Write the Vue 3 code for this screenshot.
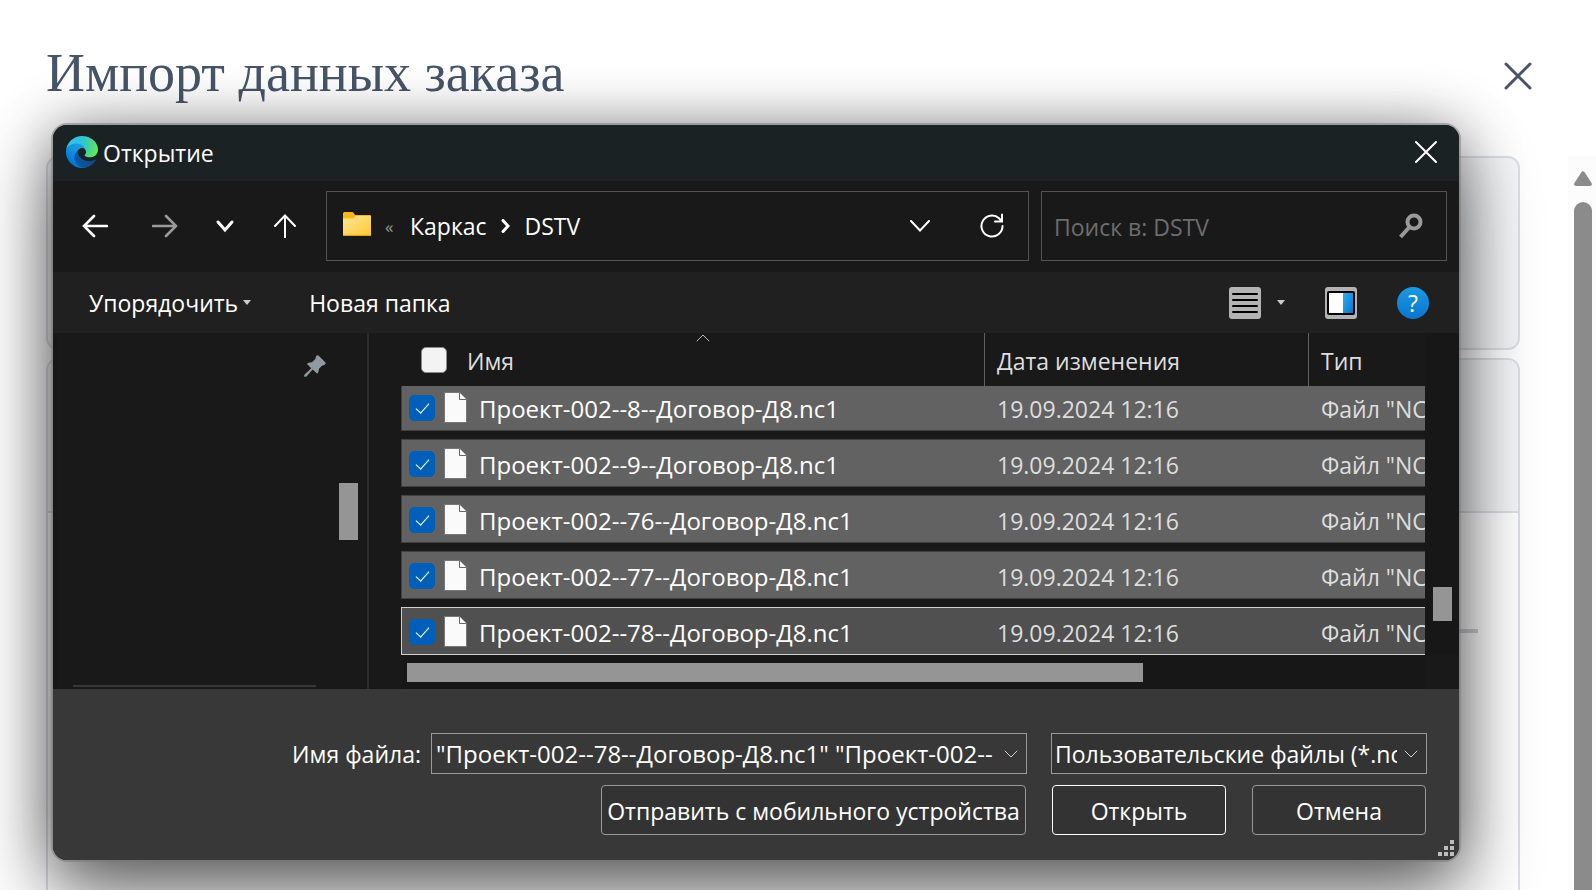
<script setup>
import { ref } from 'vue'

const files = ref([
  { name: 'Проект-002--8--Договор-Д8.nc1', date: '19.09.2024 12:16', type: 'Файл "NC1"', checked: true },
  { name: 'Проект-002--9--Договор-Д8.nc1', date: '19.09.2024 12:16', type: 'Файл "NC1"', checked: true },
  { name: 'Проект-002--76--Договор-Д8.nc1', date: '19.09.2024 12:16', type: 'Файл "NC1"', checked: true },
  { name: 'Проект-002--77--Договор-Д8.nc1', date: '19.09.2024 12:16', type: 'Файл "NC1"', checked: true },
  { name: 'Проект-002--78--Договор-Д8.nc1', date: '19.09.2024 12:16', type: 'Файл "NC1"', checked: true, focused: true },
])
const fileName = ref('"Проект-002--78--Договор-Д8.nc1" "Проект-002--')
const allChecked = ref(false)
</script>

<template>
  <div class="page">
    <header class="page-head">
      <h1>Импорт данных заказа</h1>
      <button class="page-close" type="button" aria-label="Закрыть">
        <svg width="28" height="28" viewBox="0 0 28 28"><path d="M2 2 26 26M26 2 2 26" /></svg>
      </button>
    </header>

    <div class="page-body">
      <div class="cards">
        <section class="card card-top"></section>
        <section class="card card-main">
          <div class="card-head"></div>
          <div class="card-line"></div>
        </section>
      </div>
      <div class="page-scroll">
        <svg width="18" height="16" viewBox="0 0 18 16"><path d="M7.4 1.2Q9-.6 10.6 1.2L17.6 12Q18.4 15 16 15H2Q-.4 15 .4 12Z" /></svg>
        <div class="page-thumb"></div>
      </div>
    </div>

    <div class="dialog" role="dialog" aria-labelledby="dlg-title">
      <div class="titlebar">
        <svg class="edge" width="32" height="32" viewBox="0 0 256 256">
          <defs>
            <linearGradient id="eA" x1="60" y1="178" x2="240" y2="178" gradientUnits="userSpaceOnUse"><stop offset="0" stop-color="#0c59a4" /><stop offset="1" stop-color="#114a8b" /></linearGradient>
            <linearGradient id="eB" x1="140" y1="90" x2="40" y2="210" gradientUnits="userSpaceOnUse"><stop offset="0" stop-color="#1b9de2" /><stop offset=".4" stop-color="#1595df" /><stop offset="1" stop-color="#0078d4" /></linearGradient>
            <radialGradient id="eC" cx="26" cy="46" r="240" gradientUnits="userSpaceOnUse"><stop offset="0" stop-color="#35c1f1" /><stop offset=".4" stop-color="#2dc2df" /><stop offset=".66" stop-color="#40cfa0" /><stop offset="1" stop-color="#66eb4e" /></radialGradient>
          </defs>
          <path fill="url(#eA)" d="M231 190.500c-3.400 1.800-6.900 3.400-10.500 4.700c-11.500 4.300-23.600 6.500-35.900 6.500c-47.300 0-88.500-32.500-88.500-74.300c.1-11.400 6.400-21.900 16.400-27.300c-42.800 1.800-53.800 46.400-53.800 72.500c0 73.900 68.100 81.400 82.800 81.400c7.900 0 19.800-2.300 27-4.600l1.300-.4c27.600-9.500 51-28.100 66.600-52.800c1.200-1.900.6-4.300-1.200-5.500C233.900 189.900 232.300 189.800 231 190.500z" />
          <path fill="url(#eB)" d="M105.700 241.400c-8.900-5.500-16.600-12.800-22.700-21.300c-26.300-36-18.400-86.500 17.600-112.800c3.800-2.700 7.700-5.200 11.900-7.200c3.100-1.500 8.400-4.100 15.500-4c10.100.1 19.600 4.900 25.700 13c4 5.400 6.300 11.900 6.400 18.700c0-.2 24.500-79.600-80-79.600c-43.900 0-80 41.700-80 78.200c-.2 19.300 4 38.500 12.100 56c27.600 58.800 94.800 87.600 156.400 67.100C147.500 256.100 124.500 253.200 105.700 241.400z" />
          <path fill="url(#eC)" d="M152.300 148.900c-.8 1-3.300 2.500-3.300 5.700c0 2.600 1.700 5.100 4.700 7.200c14.400 10 41.500 8.700 41.600 8.700c10.700 0 21.100-2.900 30.300-8.300c18.800-11 30.400-31.100 30.400-52.900c.3-22.400-8-37.300-11.300-43.900C223.500 23.900 177.700 0 128 0C58 0 1 56.200 0 126.200c.5-36.500 36.800-66 80-66c3.500 0 23.500.3 42 10.100c16.300 8.600 24.900 18.900 30.800 29.200c6.200 10.700 7.300 24.100 7.300 29.500C160.100 134.300 157.400 142.300 152.300 148.900z" />
        </svg>
        <span id="dlg-title">Открытие</span>
        <button class="dlg-close" type="button" aria-label="Закрыть окно">
          <svg width="22" height="22" viewBox="0 0 22 22"><path d="M1 1 21 21M21 1 1 21" /></svg>
        </button>
      </div>

      <nav class="navbar">
        <div class="arrows">
          <button type="button" aria-label="Назад"><svg width="26" height="24" viewBox="0 0 26 24"><path stroke-width="2.600" d="M25 12H2M12 2 2 12 12 22" /></svg></button>
          <button type="button" aria-label="Вперёд" class="dim"><svg width="26" height="24" viewBox="0 0 26 24"><path stroke-width="2.600" d="M1 12H24M14 2 24 12 14 22" /></svg></button>
          <button type="button" aria-label="Последние расположения"><svg width="26" height="24" viewBox="0 0 26 24"><path stroke-width="3" d="M6 8 13 16 20 8" /></svg></button>
          <button type="button" aria-label="Вверх"><svg width="26" height="24" viewBox="0 0 26 24"><path stroke-width="2" d="M13 23.500V1.500M3 12 13 1.500 23 12" /></svg></button>
        </div>
        <div class="address">
          <svg class="folder" width="28" height="24" viewBox="0 0 28 24">
            <defs><linearGradient id="fo" x1="0" y1="0" x2="1" y2="1"><stop offset="0" stop-color="#ffe69a" /><stop offset="1" stop-color="#ffc832" /></linearGradient></defs>
            <path fill="#fbb619" d="M0 1.500Q0 0 1.500 0H9Q10 0 10.700 1L12 3H27Q28 3 28 4V10H0Z" />
            <path fill="url(#fo)" d="M0 6.500H9Q10 6.500 10.700 6L12.500 4H28V23Q28 24 27 24H1Q0 24 0 23Z" />
            <path fill="#e6a31c" d="M0 22.800H28Q28 24 27 24H1Q0 24 0 22.800Z" />
          </svg>
          <span class="more">«</span>
          <a href="#">Каркас</a>
          <svg class="sep" width="10" height="14" viewBox="0 0 10 14"><path d="M2 1.500 7 7 2 12.500" /></svg>
          <a href="#">DSTV</a>
          <button class="drop" type="button" aria-label="Предыдущие расположения"><svg width="20" height="12" viewBox="0 0 20 12"><path d="M1 1 10 10.500 19 1" /></svg></button>
          <button type="button" aria-label="Обновить"><svg width="26" height="26" viewBox="0 0 26 26"><path d="M23.500 13A10.500 10.500 0 1 1 20 5.200L22.500 8M23 1.500V8.500H16" /></svg></button>
        </div>
        <div class="search">
          <input type="text" placeholder="Поиск в: DSTV" aria-label="Поиск в: DSTV" />
          <svg width="24" height="26" viewBox="0 0 24 26"><circle cx="15" cy="9" r="6.500" /><path d="M10.500 14 1.500 24" /></svg>
        </div>
      </nav>

      <div class="toolbar">
        <button type="button" class="organize">Упорядочить <i class="tri"></i></button>
        <button type="button">Новая папка</button>
        <button type="button" class="view" aria-label="Вид">
          <svg width="32" height="32" viewBox="0 0 32 32"><rect width="32" height="32" rx="3" fill="#b3b3b3" /><path stroke="#000" stroke-width="2" d="M4 7H28M4 13H28M4 19H28M4 25H28" /></svg>
          <i class="tri"></i>
        </button>
        <button type="button" class="pane" aria-label="Область просмотра">
          <svg width="32" height="32" viewBox="0 0 32 32">
            <defs><linearGradient id="pa" x1="0" y1="0" x2="1" y2="1"><stop offset="0" stop-color="#2bb0ec" /><stop offset="1" stop-color="#0a74cf" /></linearGradient></defs>
            <rect width="32" height="32" rx="3" fill="#b3b3b3" /><rect x="2" y="4" width="28" height="24" rx="2" fill="#000" /><path fill="#fff" d="M4 6H18V26H4Z" /><path fill="url(#pa)" d="M18 6H28V26H18Z" />
          </svg>
        </button>
        <button type="button" class="help" aria-label="Справка">?</button>
      </div>

      <div class="main">
        <aside class="side">
          <div class="tree">
            <svg class="pin" width="22" height="22" viewBox="0 0 22 22"><path fill="#8f9aa1" d="M12.500.8Q13.600-.2 14.700.8L21.200 7.300Q22.200 8.400 21 9.500Q19.800 10.400 18.200 10.500L14.800 14Q15 17 13.300 18.800L8.600 14.600 2.500 21.400Q.6 22.200.2 21.600Q-.2 21 .6 19.500L7.200 13.300 2.800 8.800Q5 7 8 7.200L11.500 3.800Q11.500 2 12.500.8Z" /></svg>
            <hr />
          </div>
          <div class="side-scroll"><div class="side-thumb"></div></div>
        </aside>
        <div class="list">
          <table>
            <thead>
              <tr>
                <th class="c-name">
                  <svg class="sort" width="14" height="8" viewBox="0 0 14 8"><path d="M1 7 7 1 13 7" /></svg>
                  <input type="checkbox" v-model="allChecked" aria-label="Выбрать все" />
                  <span>Имя</span>
                </th>
                <th>Дата изменения</th>
                <th>Тип</th>
              </tr>
            </thead>
            <tbody>
              <tr v-for="f in files" :key="f.name" :class="{ focused: f.focused }">
                <td class="c-name">
                  <input type="checkbox" v-model="f.checked" :aria-label="f.name" />
                  <svg width="23" height="31" viewBox="0 0 23 31"><path fill="#fafafa" stroke="#777" d="M.5.5H15.500L22.500 7.500V30.500H.5Z" /><path fill="#fff" stroke="#666" d="M15.500.5V7.500H22.500" /></svg>
                  <span>{{ f.name }}</span>
                </td>
                <td>{{ f.date }}</td>
                <td>{{ f.type }}</td>
              </tr>
            </tbody>
          </table>
          <div class="v-scroll"><div class="v-thumb"></div></div>
          <div class="h-scroll"><div class="h-thumb"></div></div>
        </div>
      </div>

      <form class="foot" @submit.prevent>
        <label for="fname">Имя файла:</label>
        <div class="combo name-combo">
          <input id="fname" type="text" v-model="fileName" />
          <svg width="14" height="8" viewBox="0 0 14 8"><path d="M1 1 7 7 13 1" /></svg>
        </div>
        <div class="combo type-combo">
          <select aria-label="Тип файлов"><option>Пользовательские файлы (*.nc)</option></select>
          <svg width="14" height="8" viewBox="0 0 14 8"><path d="M1 1 7 7 13 1" /></svg>
        </div>
        <button class="mobile" type="button">Отправить с мобильного устройства</button>
        <div class="actions">
          <button class="primary" type="submit">Открыть</button>
          <button type="button">Отмена</button>
        </div>
        <svg class="grip" width="16" height="16" viewBox="0 0 16 16"><path fill="#bdbdbd" d="M12 0h4v4h-4zM6 6h4v4H6zM12 6h4v4h-4zM0 12h4v4H0zM6 12h4v4H6zM12 12h4v4h-4z" /></svg>
      </form>
    </div>
  </div>
</template>

<style>
body { margin: 0; background: #fff; }
</style>

<style scoped>
* { box-sizing: border-box; }
button, input, select { font: inherit; color: inherit; margin: 0; padding: 0; border: 0; border-radius: 0; background: none; outline: none; }
svg { display: block; flex: none; }
button svg, .address svg, .search svg, .combo svg, .sort, .page-close svg { fill: none; stroke: currentColor; stroke-width: 2; stroke-linecap: round; }
button { display: flex; align-items: center; justify-content: center; white-space: nowrap; }
a { color: inherit; text-decoration: none; }

.page { position: relative; height: 100vh; overflow: hidden; display: flex; flex-direction: column; background: #fff; font-family: "Open Sans", "Noto Sans", sans-serif; font-size: 23px; }
.page-head { flex: none; height: 156px; padding: 44px 62px 0 46px; display: flex; justify-content: space-between; align-items: flex-start; }
h1 { margin: 0; font: 400 54px/58px "Liberation Serif", serif; color: #475569; white-space: nowrap; }
.page-close { width: 32px; height: 32px; margin-top: 16px; color: #475569; }
.page-close svg { stroke-width: 3; }
.page-body { flex: 1; min-height: 0; display: flex; }
.cards { flex: 1; display: flex; flex-direction: column; gap: 8px; padding: 0 48px 0 46px; overflow: hidden; }
.card { border: 2px solid #dce0e6; border-radius: 12px; background: #f5f6f8; flex: none; }
.card-top { height: 194px; }
.card-main { height: 640px; background: #fff; overflow: hidden; }
.card-head { height: 153px; background: #f5f6f8; border-bottom: 2px solid #dce0e6; }
.card-line { height: 4px; margin: 116px 40px 0; background: #cfd3d8; }
.page-scroll { width: 28px; background: #fcfcfc; padding: 15px 4px 0 6px; display: flex; flex-direction: column; gap: 15px; }
.page-scroll svg { fill: #8b8b8b; }
.page-thumb { flex: 1; background: #8b8b8b; border-radius: 9px 9px 0 0; }

.dialog { position: absolute; top: 125px; left: 53px; right: 137px; border-radius: 14px; background: #191919; color: #fff; box-shadow: 0 0 0 2px rgba(120, 120, 120, .5), 0 4px 60px rgba(0, 0, 0, .45), 0 40px 80px rgba(0, 0, 0, .45); }
.titlebar { height: 56px; padding: 0 22px 0 13px; display: flex; align-items: center; gap: 5px; background: #1b2224; border-radius: 14px 14px 0 0; }
.edge { margin-bottom: 2px; }
.dlg-close { margin: 0 0 2px auto; }

.navbar { height: 91px; padding: 10px 12px 11px 17px; display: flex; gap: 12px; }
.arrows { flex: none; display: flex; gap: 10px; width: 244px; }
.arrows button { flex: none; width: 50px; }
.arrows .dim { width: 60px; padding-left: 10px; }
.dim { color: #9a9a9a; }
.address { flex: 1; border: 1px solid #535353; display: flex; align-items: center; padding: 0 23px 0 16px; }
.folder { margin-bottom: 4px; }
.address .folder { stroke: none; }
.more { color: #999; font-size: 17px; width: 39px; padding-left: 14px; }
.sep { margin: 0 14px; }
.address .sep { stroke-width: 3; }
.drop { margin-left: auto; margin-right: 49px; }
.search { flex: none; width: 406px; border: 1px solid #535353; display: flex; align-items: center; padding: 0 23px 0 12px; color: #9a9a9a; }
.search input { flex: 1; min-width: 0; height: 100%; padding-top: 2px; }
.search input::placeholder { color: #6d6d6d; opacity: 1; }
.search svg { stroke-width: 4; stroke-linecap: butt; }

.toolbar { height: 61px; padding: 0 30px 0 36px; display: flex; align-items: center; background: #202020; }
.organize { gap: 5px; margin-right: 58px; }
.tri { width: 0; border: 4px solid transparent; border-top: 5px solid #ccc; border-bottom: 0; }
.view { margin-left: auto; gap: 16px; }
.pane { margin: 0 40px; }
.toolbar svg { stroke: none; }
.help { width: 32px; height: 32px; border-radius: 50%; background: linear-gradient(#1b9ae0, #0a75d2); }

.main { display: flex; height: 356px; }
.side { flex: none; width: 316px; display: flex; justify-content: space-between; border-right: 2px solid #2b2b2b; border-left: 4px solid #171717; margin-right: 4px; }
.tree { width: 262px; padding: 22px 0 2px 16px; display: flex; flex-direction: column; justify-content: space-between; }
.pin { align-self: flex-end; margin-right: -7px; }
.tree hr { width: 243px; margin: 0; border: 0; border-top: 2px solid #383838; }
.side-scroll { width: 28px; padding-top: 150px; }
.side-thumb { width: 19px; height: 57px; background: #959595; }
.list { flex: 1; min-width: 0; display: grid; grid-template-columns: minmax(0, 1fr) 34px; grid-template-rows: 322px 34px; padding-left: 28px; }
table, thead { display: block; }
tr { display: grid; grid-template-columns: minmax(0, 1fr) 324px 117px; }
th, td { font-weight: 400; text-align: left; padding: 2px 0 0 12px; display: flex; align-items: center; white-space: nowrap; overflow: hidden; }
thead tr { height: 53px; }
th { color: #dedede; border-left: 1px solid #5f5f5f; }
th.c-name { position: relative; border: 0; margin-left: 20px; padding: 0; gap: 20px; }
th.c-name span { padding-top: 2px; }
.sort { position: absolute; top: 1px; left: 50%; margin-left: -7px; stroke-width: 1; color: #bbb; }
tbody { display: flex; flex-direction: column; justify-content: flex-end; gap: 8px; height: 269px; overflow: hidden; }
tbody tr { flex: none; height: 48px; background: #626262; border: solid #404040; border-width: 1px 0 1px 1px; }
tbody tr.focused { background: #505050; border-color: #cfcfcf; }
td { color: #dedede; padding: 4px 0 0 13px; }
td.c-name { color: #fff; padding: 2px 0 0 7px; gap: 9px; font-size: 24px; }
td.c-name svg { margin-bottom: 2px; }
td.c-name span { margin-left: 3px; }
input[type="checkbox"] { appearance: none; flex: none; width: 26px; height: 26px; border: 1px solid #8a8a8a; border-radius: 5px; background: #f3f3f3; display: flex; justify-content: center; }
input[type="checkbox"]:checked { background: #005fb8; border-color: #005fb8; }
input[type="checkbox"]:checked::after { content: ""; width: 6px; height: 12px; margin-top: 4px; border: solid #fff; border-width: 0 1px 1px 0; transform: rotate(42deg); }
.v-scroll { padding: 254px 7px 0 8px; background: #171717; }
.v-thumb { height: 34px; background: #959595; }
.h-scroll { padding: 8px 0 0 6px; background: #171717; }
.h-thumb { width: 72.3%; height: 19px; background: #959595; }

.foot { position: relative; height: 171px; padding: 44px 32px 0 0; background: #383838; border-radius: 0 0 14px 14px; display: grid; grid-template-columns: minmax(0, 1fr) 596px 376px; grid-template-rows: 41px 50px; column-gap: 24px; row-gap: 11px; align-content: start; }
.foot label { align-self: center; justify-self: end; margin-right: -14px; white-space: nowrap; }
.combo { display: flex; align-items: center; border: 1px solid #999; padding: 0 8px 0 4px; background: #333; color: #fff; }
.name-combo { background: #383838; font-size: 24px; }
.type-combo { padding-left: 3px; }
.combo input, .combo select { flex: 1; min-width: 0; height: 100%; appearance: none; overflow: hidden; margin-right: 7px; }
.combo select { text-overflow: clip; }
.combo svg { stroke-width: 1; color: #d0d0d0; }
.foot button { background: #333; border: 1px solid #999; border-radius: 4px; padding-top: 2px; }
.mobile { grid-column: 2; justify-self: end; width: 425px; margin-right: 1px; }
.actions { display: grid; grid-template-columns: 1fr 1fr; gap: 26px; padding: 0 1px; }
.foot .primary { border-color: #fff; }
.grip { position: absolute; right: 5px; bottom: 4px; }
</style>
